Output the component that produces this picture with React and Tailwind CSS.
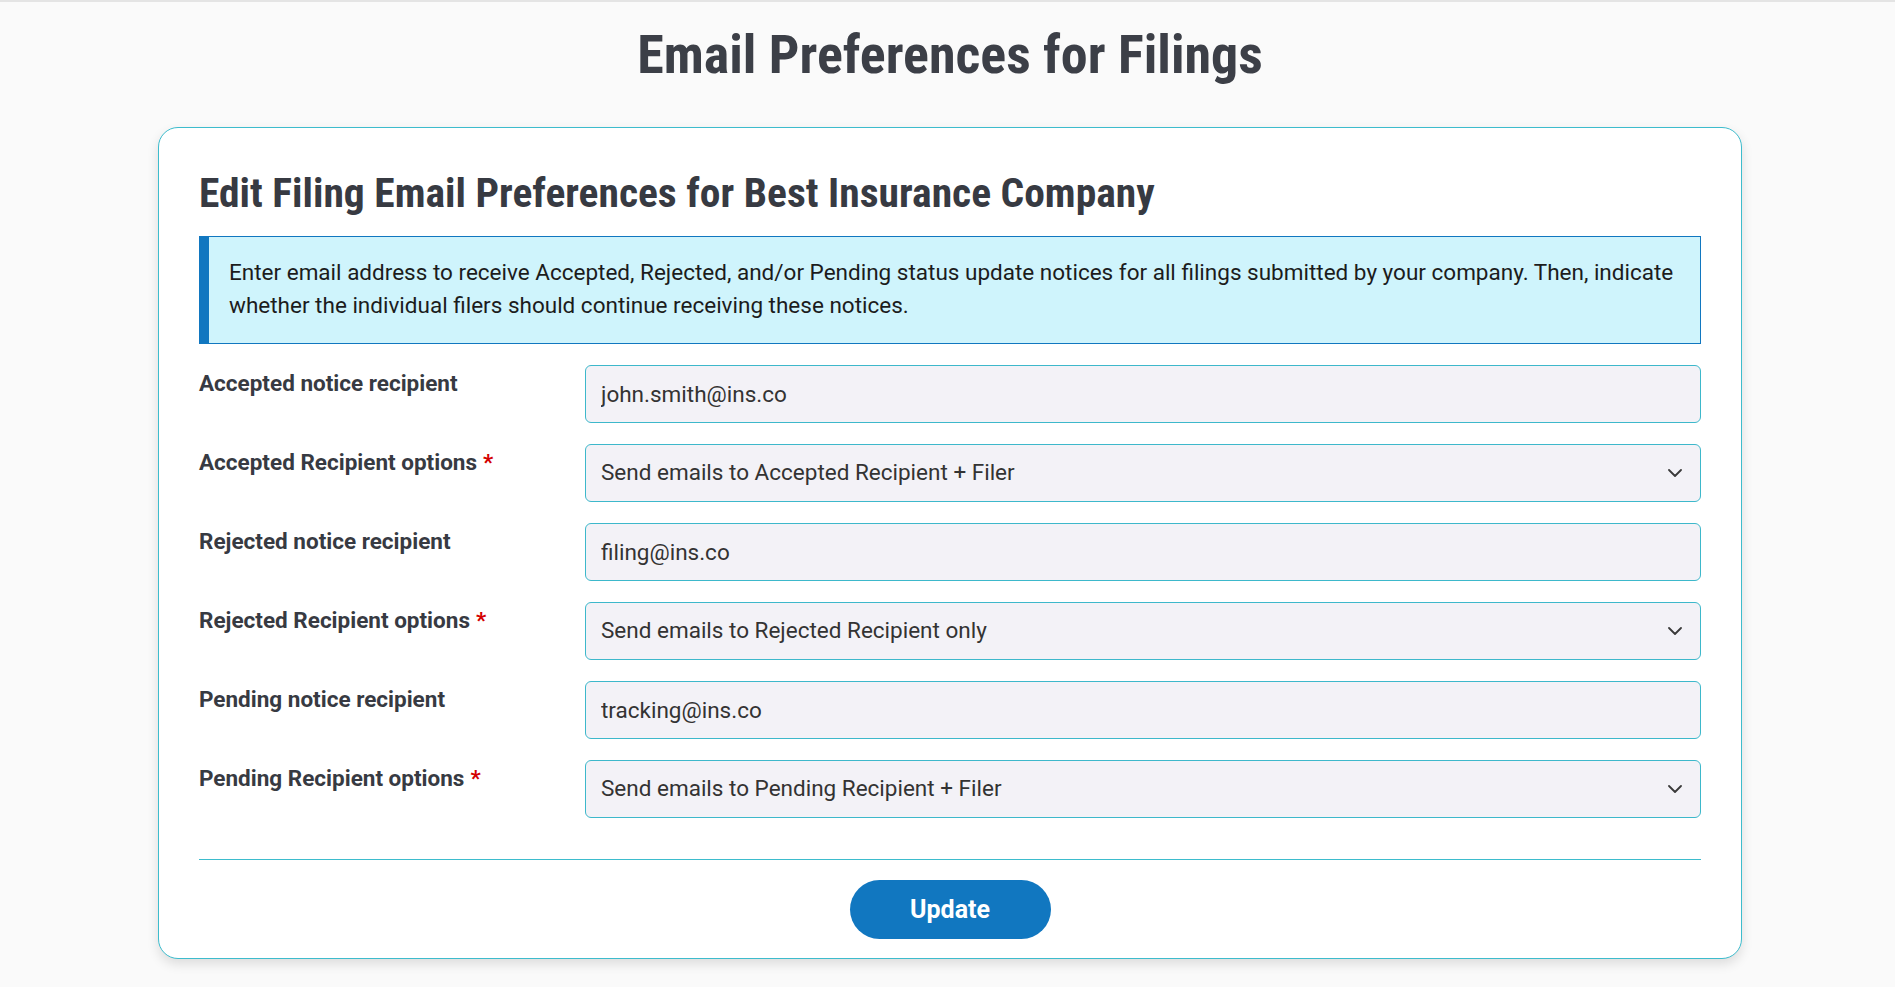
import React from "react";

const Chevron = () => (
  <svg width="14" height="8" viewBox="0 0 14 8" fill="none" className="shrink-0">
    <path d="M1 1 L7 7 L13 1" stroke="#3a3a3a" strokeWidth="1.8" strokeLinecap="round" strokeLinejoin="round" />
  </svg>
);

const Label = ({ children, required }) => (
  <div className="pt-[3px] text-[22.5px] leading-[30px] font-bold text-[#373a42]">
    {children}
    {required && <span className="ml-[6px] text-[#d40000]">*</span>}
  </div>
);

const TextField = ({ value }) => (
  <input
    readOnly
    defaultValue={value}
    className="h-[58px] w-full rounded-[6px] border border-[#3db8cb] bg-[#f3f2f7] px-[15px] text-[22.5px] text-[#333333] outline-none [font-family:Roboto,'Liberation_Sans',sans-serif]"
  />
);

const SelectField = ({ value }) => (
  <div className="flex h-[58px] w-full items-center justify-between rounded-[6px] border border-[#3db8cb] bg-[#f3f2f7] pl-[15px] pr-[18px] text-[22.5px] text-[#333333]">
    <span>{value}</span>
    <Chevron />
  </div>
);

export default function App() {
  const rows = [
    { label: "Accepted notice recipient", type: "input", value: "john.smith@ins.co" },
    { label: "Accepted Recipient options", type: "select", value: "Send emails to Accepted Recipient + Filer", required: true },
    { label: "Rejected notice recipient", type: "input", value: "filing@ins.co" },
    { label: "Rejected Recipient options", type: "select", value: "Send emails to Rejected Recipient only", required: true },
    { label: "Pending notice recipient", type: "input", value: "tracking@ins.co" },
    { label: "Pending Recipient options", type: "select", value: "Send emails to Pending Recipient + Filer", required: true },
  ];

  return (
    <div className="min-h-[987px] bg-[#fafafa] [font-family:Roboto,'Liberation_Sans',sans-serif]">
      <div className="h-[2px] bg-[#e4e4e4]" />
      <div className="pl-[5px]">
        <h1 className="mt-[20px] text-center text-[54px] leading-[66px] font-bold text-[#3c3f47] [font-family:'Liberation_Sans_Narrow','Roboto_Condensed','DejaVu_Sans_Condensed',sans-serif]">
          Email Preferences for Filings
        </h1>
        <div className="mx-auto mt-[39px] w-[1584px] rounded-[20px] border border-[#3dbccd] bg-white px-10 pt-[40px] pb-[19px] shadow-[0_5px_12px_rgba(0,0,0,0.12)]">
          <h2 className="text-[41.5px] leading-[50px] font-bold text-[#373a42] [font-family:'Liberation_Sans_Narrow','Roboto_Condensed','DejaVu_Sans_Condensed',sans-serif]">
            Edit Filing Email Preferences for Best Insurance Company
          </h2>
          <div className="mt-[18px] border border-l-[10px] border-[#1177c0] bg-[#cff4fc] pt-[19px] pb-[21px] pl-5 pr-5 text-[22.5px] leading-[33px] text-[#1c1c1c]">
            Enter email address to receive Accepted, Rejected, and/or Pending status update notices for all filings submitted by your company. Then, indicate whether the individual filers should continue receiving these notices.
          </div>
          <div className="mt-[21px] flex flex-col gap-[21px]">
            {rows.map((r) => (
              <div key={r.label} className="grid grid-cols-[386px_1fr]">
                <Label required={r.required}>{r.label}</Label>
                {r.type === "input" ? <TextField value={r.value} /> : <SelectField value={r.value} />}
              </div>
            ))}
          </div>
          <div className="mt-[41px] h-px bg-[#3dbccd]" />
          <div className="mt-[20px] flex justify-center">
            <button className="h-[59px] w-[201px] rounded-full bg-[#1177c0] text-[25px] font-bold text-white">
              Update
            </button>
          </div>
        </div>
      </div>
    </div>
  );
}
